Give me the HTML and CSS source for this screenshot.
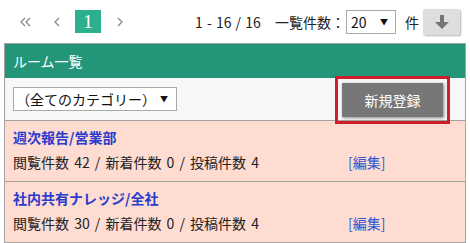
FILE: index.html
```html
<!DOCTYPE html>
<html lang="ja">
  <head>
    <meta charset="UTF-8" />
    <meta name="viewport" content="width=device-width, initial-scale=1.0" />
    <title>ルーム一覧</title>
    <link rel="stylesheet" href="styles.css">
  </head>

  <body>
    <div id="wrap">
      <!-- 上部バー -->
      <div class="topbar">
        <div class="pager">
          <span class="pg">
            <svg width="12" height="10" viewBox="0 0 12 10"><polyline points="5,1 1,5 5,9" /><polyline points="10,1 6,5 10,9" /></svg>
          </span>
          <span class="pg">
            <svg width="7" height="10" viewBox="0 0 7 10"><polyline points="5,1 1,5 5,9" /></svg>
          </span>
          <span class="pg cur">1</span>
          <span class="pg">
            <svg width="7" height="10" viewBox="0 0 7 10"><polyline points="2,1 6,5 2,9" /></svg>
          </span>
        </div>
        <span class="count">1 - 16 / 16</span>

        <div class="perpage">
          <span class="lbl">一覧件数：</span>
          <div class="sel small"><span>20</span><i>▼</i></div>
          <span class="unit">件</span>
          <span class="dl">
            <svg width="14" height="16" viewBox="0 0 14 16"><rect x="5" y="1" width="4" height="8" /><polygon points="0,8 14,8 7,15" /></svg>
          </span>
        </div>
      </div>

      <!-- ルーム一覧パネル -->
      <section class="panel">
        <h2 class="phead">ルーム一覧</h2>
        <div class="tools">
          <div class="sel cat"><span>（全てのカテゴリー）</span><i>▼</i></div>
          <button class="btn-new">新規登録</button>
        </div>

        <ul class="rooms">
          <li>
            <a class="rname">週次報告/営業部</a>
            <div class="rinfo">
              <span>閲覧件数 42 / 新着件数 0 / 投稿件数 4</span>
              <a class="edit">[編集]</a>
            </div>
          </li>
          <li>
            <a class="rname">社内共有ナレッジ/全社</a>
            <div class="rinfo">
              <span>閲覧件数 30 / 新着件数 0 / 投稿件数 4</span>
              <a class="edit">[編集]</a>
            </div>
          </li>
        </ul>
      </section>
    </div>
  </body>
</html>
```

FILE: styles.css
```css
html, body, ul, h2{
  margin: 0;
  padding: 0;
}

ul{
  list-style: none;
}

body{
  font: 14px/20px "Noto Sans CJK JP", sans-serif;
  color: #222;
  background-color: #fff;
}

#wrap{
  margin: 0 4px;
}

/* 上部バー */
.topbar{
  display: flex;
  align-items: center;
  height: 43px;
}

.pager{
  display: flex;
  align-items: center;
  padding-left: 9px;
}

.pg{
  display: flex;
  align-items: center;
  justify-content: center;
  width: 26px;
  height: 23px;
  margin-right: 5px;
}

.pg svg polyline{
  fill: none;
  stroke: #8a8a8a;
  stroke-width: 1.3;
}

/* 現在ページ */
.pg.cur{
  background-color: #2baf8c;
  color: #fff;
  font: 19px/23px "Liberation Serif", serif;
}

.count{
  margin-left: 58px;
  word-spacing: 1px;
}

.perpage{
  display: flex;
  align-items: center;
  margin-left: auto;
  padding-right: 6px;
}

/* セレクト風ボックス */
.sel{
  display: flex;
  align-items: center;
  justify-content: space-between;
  height: 24px;
  box-sizing: border-box;
  border: 1px solid #a9a9a9;
  background-color: #fff;
  color: #111;
}

.sel i{
  font-style: normal;
  font-size: 8px;
}

.sel.small{
  width: 50px;
  padding: 0 7px 0 4px;
  margin-left: 1px;
}

.unit{
  margin-left: 9px;
}

.dl{
  display: flex;
  align-items: center;
  justify-content: center;
  width: 37px;
  height: 26px;
  margin-left: 4px;
  background-color: #dedede;
  border-radius: 2px;
  box-shadow: 1px 1px 2px rgba(0,0,0,.3);
}

.dl svg{
  fill: #757575;
}

/* パネル */
.panel{
  border: 1px solid #a4a4a4;
  border-bottom: none;
}

.phead{
  height: 34px;
  padding-left: 8px;
  background-color: #23967a;
  color: #fff;
  font-size: 14px;
  font-weight: normal;
  line-height: 34px;
}

.tools{
  display: flex;
  align-items: center;
  justify-content: space-between;
  height: 42px;
  padding: 0 22px 0 8px;
  background-color: #f7f7f7;
  border-bottom: 1px solid #a4a4a4;
}

.sel.cat{
  width: 164px;
  padding: 0 8px 0 2px;
}

.btn-new{
  width: 101px;
  height: 34px;
  margin-top: 2px;
  border: none;
  background-color: #777;
  color: #fff;
  font: 14px/20px "Noto Sans CJK JP", sans-serif;
  box-shadow: 1px 1px 3px rgba(0,0,0,.45);
  /* 強調の赤枠 */
  outline: 3px solid #cc1f2a;
  outline-offset: 4px;
}

/* ルーム行 */
.rooms li{
  padding: 6px 8px 9px;
  background-color: #fedcd2;
  border-bottom: 1px solid #a4a4a4;
}

.rname{
  display: block;
  color: #2b3ccc;
  font-weight: bold;
}

.rinfo{
  display: grid;
  grid-template-columns: 335px auto;
  margin-top: 5px;
  word-spacing: 2px;
}

.edit{
  color: #3153d6;
}
```
